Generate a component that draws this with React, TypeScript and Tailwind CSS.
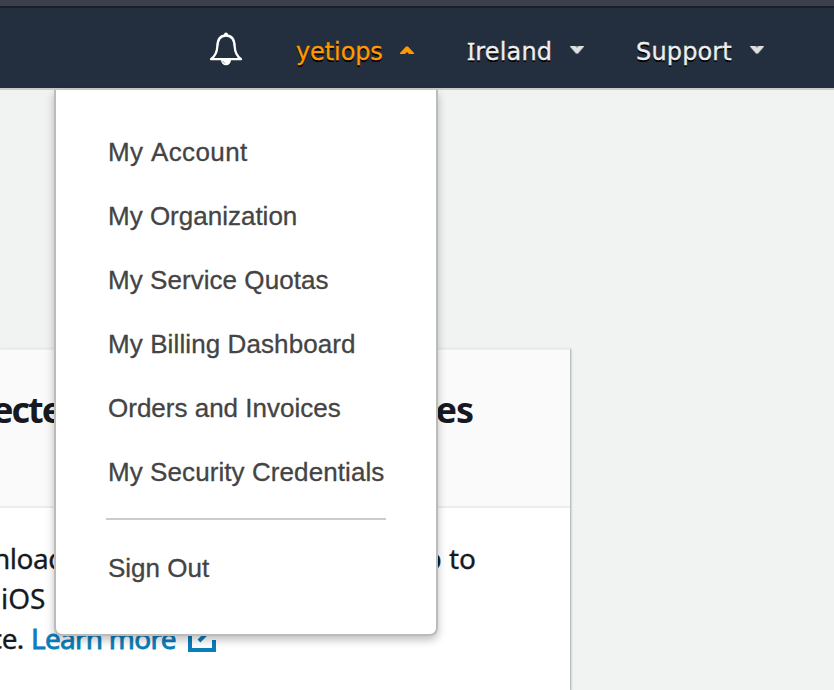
import React from 'react'

interface MenuEntry {
  label: string
  spacing: string
}

const ACCOUNT_MENU: MenuEntry[] = [
  { label: 'My Account', spacing: 'tracking-[0.38px]' },
  { label: 'My Organization', spacing: 'tracking-normal' },
  { label: 'My Service Quotas', spacing: 'tracking-[0.05px]' },
  { label: 'My Billing Dashboard', spacing: 'tracking-[0.1px]' },
  { label: 'Orders and Invoices', spacing: 'tracking-normal' },
  { label: 'My Security Credentials', spacing: 'tracking-[0.08px]' },
]

function BellIcon() {
  return (
    <svg width="34" height="36" viewBox="0 0 34 36" fill="none">
      <path
        d="M2 28.2c4-3 6-6 6.3-12.5C8.5 8.5 11.5 4.500 17 4.500S25.500 8.500 25.700 15.700C26 22.200 28 25.200 32 28.200Z"
        stroke="#fff"
        strokeWidth="2.3"
        strokeLinejoin="round"
      />
      <path d="M15 4.200V3.500a2 2 0 0 1 4 0v.7Z" fill="#fff" />
      <path d="M12 29h10a5 5.300 0 0 1-10 0Z" fill="#fff" />
      <path d="M13.500 30l2.500 2.500" stroke="#8d949c" strokeWidth="1" />
    </svg>
  )
}

function CaretUp() {
  return (
    <svg width="14" height="8" viewBox="0 0 14 8">
      <path d="M0 8V7L6 .5h2L14 7v1H9L7 6 5 8Z" fill="#f90" />
    </svg>
  )
}

function CaretDown() {
  return (
    <svg width="14" height="8" viewBox="0 0 14 8">
      <path d="M0 0h14v1L8 8H6L0 1Z" fill="#8b8f94" />
      <path d="M0 0h5l2 2L9 0h5L8 7H6Z" fill="#e0e0e0" />
    </svg>
  )
}

function ExternalIcon() {
  return (
    <svg width="28" height="28" viewBox="0 0 28 28" fill="none" stroke="#0a7dbb" strokeWidth="4">
      <path d="M12 2H2v24h24V16" />
      <path d="M16 2h10v10M25 3L11 17" />
    </svg>
  )
}

function NavBar() {
  return (
    <header className="h-[90px] border-t-[6px] border-b-2 border-t-[#3c404c] border-b-[#ccc]">
      <nav className="flex h-[82px] items-center border-t-2 border-[#1b1f28] bg-[#232f3e] pl-[209px] font-['DejaVu_Sans',Verdana,sans-serif] text-[24px] text-[#eee] [text-shadow:0_2px_0_#000] [-webkit-text-stroke:0.3px]">
        <div className="mt-[2px]">
          <BellIcon />
        </div>
        <div className="ml-[53px] flex w-[171px] items-center gap-[18px] pt-1 text-[#f90]">
          <span className="w-[86px] pt-[3px] tracking-[-0.1px] whitespace-nowrap">yetiops</span>
          <CaretUp />
        </div>
        <div className="flex w-[169px] items-center gap-[18px] pt-1">
          <span className="w-[85px] pt-[3px] leading-9 tracking-[0.15px] whitespace-nowrap">
            <span className="font-['Noto_Sans',sans-serif]">I</span>reland
          </span>
          <CaretDown />
        </div>
        <div className="flex items-center gap-[18px] pt-1">
          <span className="w-[96px] pt-[3px] tracking-[0.15px] whitespace-nowrap">Support</span>
          <CaretDown />
        </div>
      </nav>
    </header>
  )
}

function AccountMenu() {
  return (
    <div className="absolute top-[90px] left-[54px] w-[384px] rounded-b-lg border-2 border-t-0 border-[#bbb] bg-white px-[50px] pt-[30px] pb-[34px] font-['Liberation_Sans',Arial,sans-serif] text-[26px] text-[#444] shadow-[0_4px_8px_rgba(0,0,0,0.25)] [font-kerning:none] [-webkit-text-stroke:0.3px]">
      <ul>
        {ACCOUNT_MENU.map(({ label, spacing }) => (
          <li key={label} className={`flex h-16 items-center pl-[2px] whitespace-nowrap ${spacing}`}>
            {label}
          </li>
        ))}
      </ul>
      <hr className="mt-[14px] mb-4 border-t-2 border-[#ccc]" />
      <div className="flex h-16 items-center pl-[2px]">Sign Out</div>
    </div>
  )
}

function MobileAppCard() {
  return (
    <section className="mt-[258px] w-[570px] flex-1 border-t-2 border-[#eaeded] bg-white font-['Noto_Sans',sans-serif] text-[#16191f] shadow-[1px_1px_2px_rgba(0,28,36,0.35)]">
      <div className="flex h-[158px] justify-between border-b-2 border-[#eaeded] bg-[#fafafa] pt-[36px] pr-[97px] text-[36px] leading-[48px] font-bold">
        <h2 className="-ml-[8px] tracking-[-2px]">ecte</h2>
        <h2 className="tracking-[-1px]">es</h2>
      </div>
      <div className="pt-[30px] text-[28px] leading-[40px] [-webkit-text-stroke:0.3px]">
        <div className="flex justify-between pr-[94px]">
          <span className="-ml-[7px] tracking-[-0.5px]">nload</span>
          <span>p to</span>
        </div>
        <div className="pl-[1px]">iOS</div>
        <div className="flex items-center">
          <span className="-ml-[11px] w-[42px] tracking-[-0.8px]">ce.</span>
          <span className="w-[157px] tracking-[-0.75px] whitespace-nowrap text-[#0a7dbb] [-webkit-text-stroke:0.8px]">
            Learn more
          </span>
          <ExternalIcon />
        </div>
      </div>
    </section>
  )
}

export default function App() {
  return (
    <div className="relative flex h-[690px] w-[834px] flex-col overflow-hidden bg-[#f1f3f3]">
      <NavBar />
      <MobileAppCard />
      <AccountMenu />
    </div>
  )
}
